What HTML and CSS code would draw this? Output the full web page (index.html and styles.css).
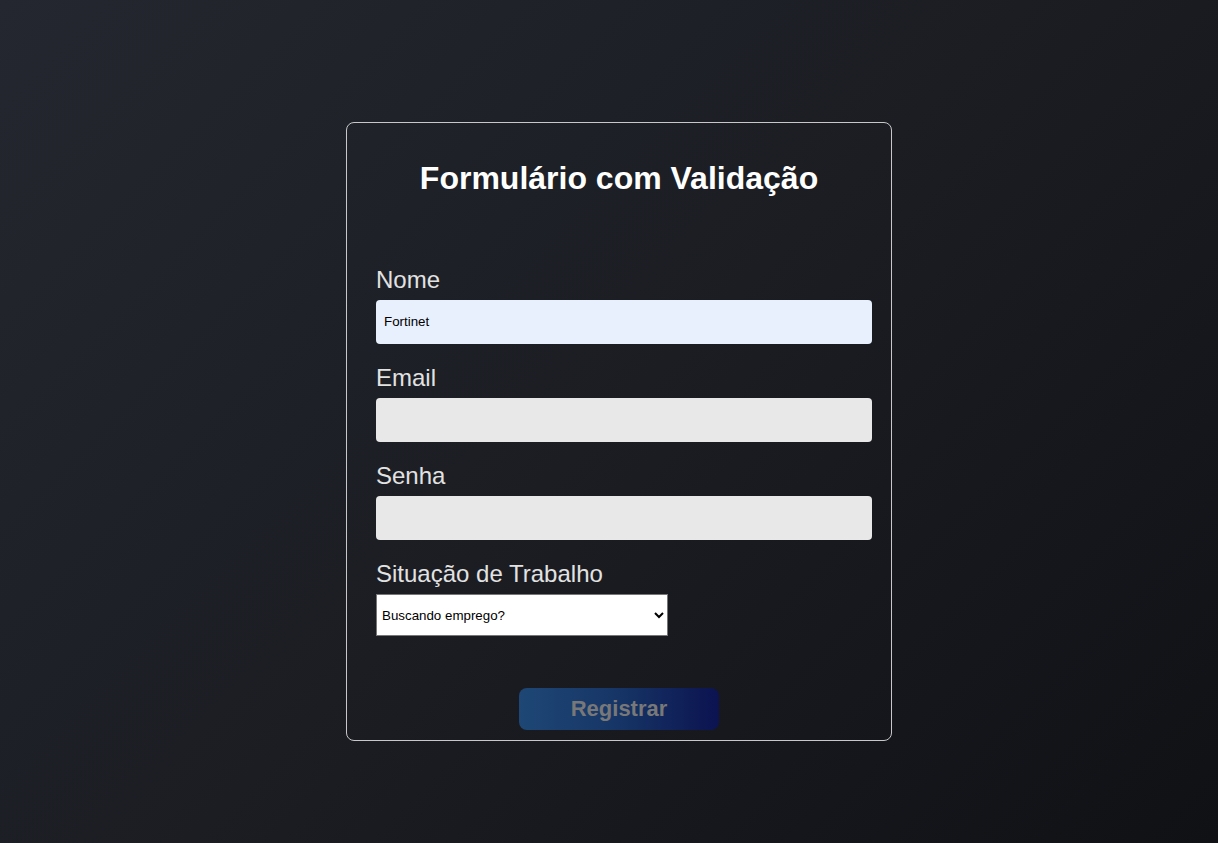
FILE: index.html
```html
<!DOCTYPE html>
<html lang="pt-BR">
<head>
<meta charset="utf-8">
<title>Formulário com Validação</title>
<link rel="stylesheet" href="styles.css">
</head>
<body>
<main class="page">
  <form class="card" onsubmit="return false">
    <h1 class="title">Formulário com Validação</h1>
    <div class="fields">
      <div class="field">
        <label class="label" for="nome">Nome</label>
        <input class="input input-filled" id="nome" type="text" value="Fortinet">
      </div>
      <div class="field">
        <label class="label" for="email">Email</label>
        <input class="input" id="email" type="email">
      </div>
      <div class="field">
        <label class="label" for="senha">Senha</label>
        <input class="input" id="senha" type="password">
      </div>
      <div class="field">
        <label class="label" for="situacao">Situação de Trabalho</label>
        <select class="select" id="situacao">
          <option>Buscando emprego?</option>
          <option>Sim</option>
          <option>Não</option>
        </select>
      </div>
    </div>
    <div class="actions">
      <button class="button" type="submit" disabled>Registrar</button>
    </div>
  </form>
</main>
</body>
</html>
```

FILE: styles.css
```css
* { box-sizing: border-box; }

html, body {
  margin: 0;
  height: 100%;
}

body {
  font-family: "Liberation Sans", Arial, sans-serif;
  background: linear-gradient(135deg, #24272f 0%, #1b1d23 50%, #101115 100%);
  color: #fff;
}

.page {
  min-height: 100%;
  display: flex;
  justify-content: center;
  padding-top: 122px;
  padding-left: 20px;
}

.card {
  width: 546px;
  height: 619px;
  border: 1px solid #c8c8c8;
  border-radius: 8px;
  padding: 0 19px 0 29px;
  display: flex;
  flex-direction: column;
}

.title {
  margin: 37px 10px 0 0;
  font-size: 32px;
  font-weight: bold;
  text-align: center;
  color: #fff;
  line-height: 37px;
}

.fields {
  margin-top: 69px;
  display: flex;
  flex-direction: column;
  gap: 20px;
}

.field {
  display: flex;
  flex-direction: column;
  gap: 6px;
}

.label {
  font-size: 24px;
  line-height: 28px;
  color: #e2e2e2;
}

.input {
  width: 100%;
  height: 44px;
  border: none;
  border-radius: 4px;
  background: #e8e8e8;
  padding: 0 8px 1px;
  font-family: "Liberation Sans", Arial, sans-serif;
  font-size: 13.33px;
  color: #000;
  outline: none;
}

.input-filled {
  background: #e8f0fe;
}

.select {
  width: 292px;
  height: 42px;
  border: 1px solid #767676;
  border-radius: 0;
  background: #fff;
  font-family: "Liberation Sans", Arial, sans-serif;
  font-size: 13.33px;
  color: #000;
  padding: 0 0 0 1px;
}

.actions {
  margin-top: 52px;
  display: flex;
  justify-content: center;
  margin-left: -10px;
}

.button {
  width: 200px;
  height: 42px;
  border: none;
  border-radius: 8px;
  background: linear-gradient(90deg, #1e4776 0%, #163566 50%, #0c1350 100%);
  color: #787878;
  font-family: "Liberation Sans", Arial, sans-serif;
  font-size: 22px;
  font-weight: bold;
  cursor: not-allowed;
}
```
